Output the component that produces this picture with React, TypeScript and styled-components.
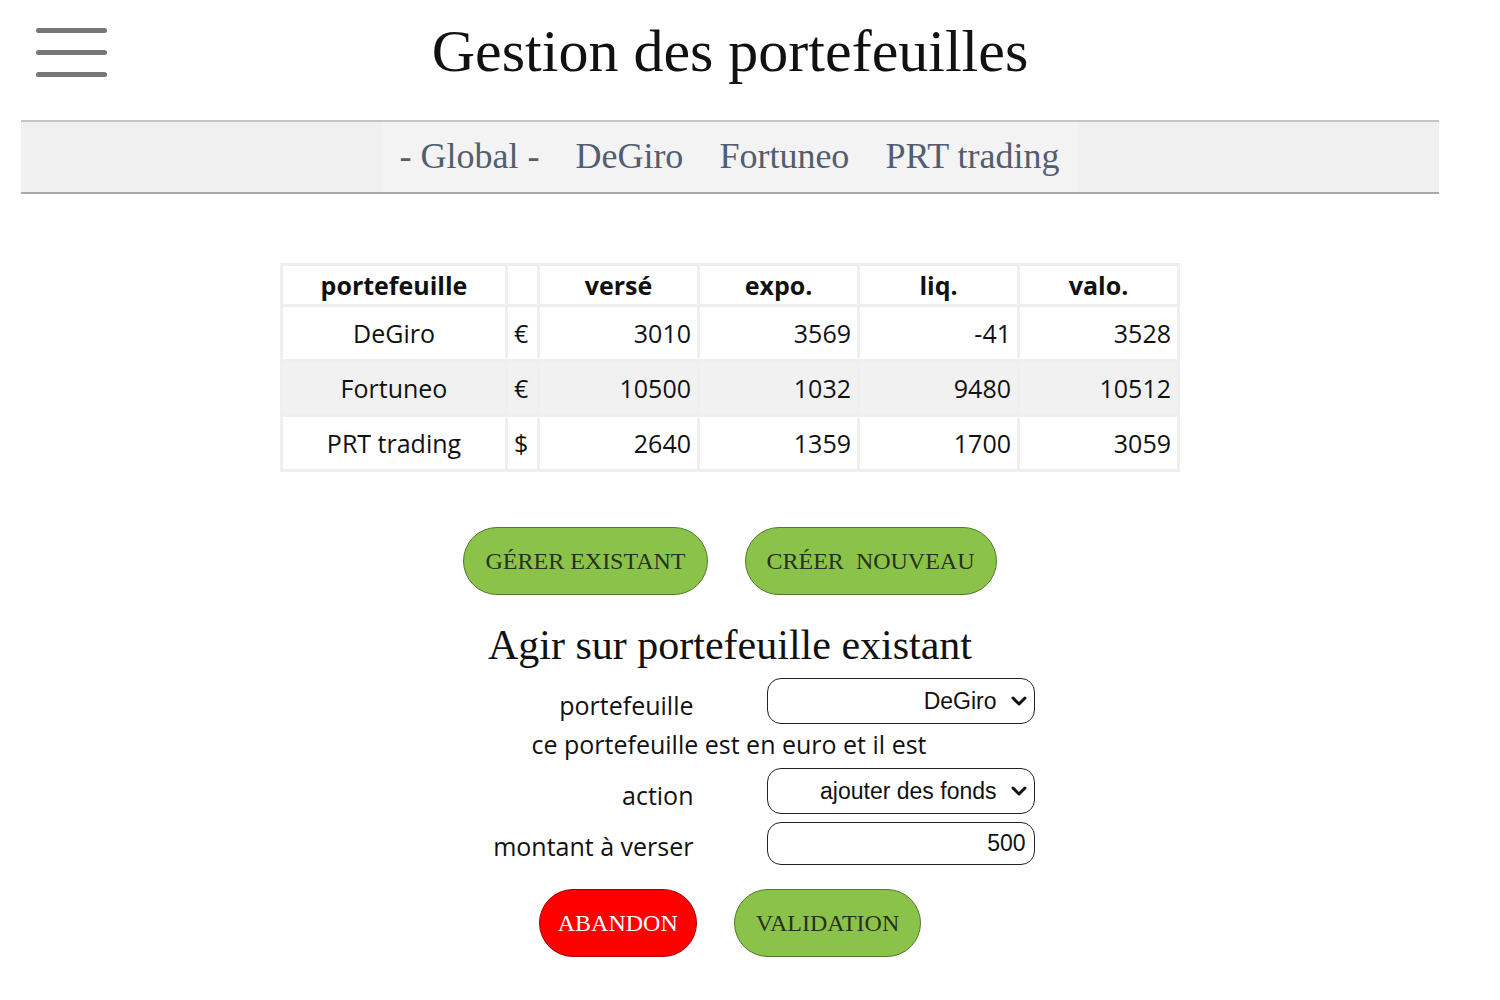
import React from "react";
import styled, { createGlobalStyle } from "styled-components";

const Global = createGlobalStyle`
  html, body { margin: 0; padding: 0; background: #fff; }
  body { font-family: "Open Sans", "Liberation Sans", sans-serif; color: #111; }
`;

const Page = styled.div`
  width: 1418px;
  margin-left: 21px;
  display: flex;
  flex-direction: column;
  align-items: center;
`;

const Header = styled.header`
  width: 100%;
  height: 120px;
  display: grid;
  grid-template-columns: 1fr auto 1fr;
  align-items: start;
`;

const Burger = styled.button`
  margin: 28px 0 0 15px;
  padding: 0;
  width: 71px;
  border: none;
  background: none;
  display: flex;
  flex-direction: column;
  gap: 17px;
  justify-self: start;
`;

const BurgerBar = styled.span`
  display: block;
  height: 5px;
  border-radius: 3px;
  background: #777;
`;

const Title = styled.h1`
  margin: 17px 0 0;
  font-family: "Liberation Serif", "Times New Roman", serif;
  font-weight: 400;
  font-size: 60px;
  line-height: 69px;
  color: #111;
`;

const NavBar = styled.nav`
  width: 100%;
  height: 70px;
  background: #f0f0f0;
  border-top: 2px solid #c4c4c4;
  border-bottom: 2px solid #a9a9a9;
  display: flex;
  justify-content: center;
`;

const NavList = styled.div`
  display: flex;
  align-items: center;
  gap: 36px;
  padding: 0 18px 0 17px;
  background: #f3f3f3;
`;

const NavItem = styled.a`
  font-family: "Liberation Serif", "Times New Roman", serif;
  font-size: 36px;
  color: #525d70;
  text-decoration: none;
  margin-top: -2px;
`;

const Table = styled.table`
  margin-top: 69px;
  border-collapse: collapse;
  font-family: "Open Sans", sans-serif;
  font-size: 25px;
  color: #111;
`;

const Row = styled.tr<{ $shade?: boolean }>`
  background: ${(p) => (p.$shade ? "#f1f1f1" : "#fff")};
`;

const Th = styled.th<{ $w: number }>`
  width: ${(p) => p.$w}px;
  height: 41px;
  padding: 0 6px;
  box-sizing: border-box;
  border: 3px solid #efefef;
  font-weight: 700;
  text-align: center;
  line-height: 30px;
  vertical-align: middle;
`;

const Td = styled.td<{ $align?: string }>`
  height: 52px;
  padding: 0 6px;
  border: 3px solid #efefef;
  text-align: ${(p) => p.$align || "right"};
  line-height: 34px;
`;

const ButtonRow = styled.div<{ $top: number; $gap: number }>`
  margin-top: ${(p) => p.$top}px;
  display: flex;
  gap: ${(p) => p.$gap}px;
`;

const Pill = styled.button<{ $variant?: "green" | "red" }>`
  height: 68px;
  padding: 0 ${(p) => (p.$variant === "red" ? 18 : 21)}px;
  border-radius: 34px;
  font-family: "Liberation Serif", "Times New Roman", serif;
  font-size: 24px;
  white-space: pre;
  background: ${(p) => (p.$variant === "red" ? "#ff0000" : "#8bc34a")};
  color: ${(p) => (p.$variant === "red" ? "#fff" : "#28311f")};
  border: 1.5px solid ${(p) => (p.$variant === "red" ? "#a80000" : "#4f7a2b")};
`;

const SubTitle = styled.h2`
  margin: 26px 0 0;
  font-family: "Liberation Serif", "Times New Roman", serif;
  font-weight: 400;
  font-size: 42px;
  line-height: 48px;
  color: #111;
`;

const Form = styled.div`
  margin-top: 9px;
  display: grid;
  grid-template-columns: 268px 268px;
  column-gap: 73px;
  align-items: end;
  font-family: "Open Sans", sans-serif;
  font-size: 25px;
  line-height: 33px;
`;

const Label = styled.label`
  text-align: right;
  margin-bottom: 2px;
`;

const Info = styled.div`
  grid-column: 1 / span 2;
  text-align: center;
  margin-top: 4px;
  padding-right: 2px;
`;

const SelectWrap = styled.div<{ $top?: number }>`
  position: relative;
  margin-top: ${(p) => p.$top || 0}px;
`;

const Select = styled.select`
  appearance: none;
  -webkit-appearance: none;
  display: block;
  width: 268px;
  height: 46px;
  box-sizing: border-box;
  border: 1.5px solid #222;
  border-radius: 14px;
  background: #fff;
  font-family: "Liberation Sans", Arial, sans-serif;
  font-size: 23px;
  color: #111;
  text-align: right;
  text-align-last: right;
  padding: 0 37px 0 10px;
`;

const Chevron = styled.svg`
  position: absolute;
  right: 8px;
  top: 50%;
  transform: translateY(-50%);
  width: 16px;
  height: 12px;
  pointer-events: none;
`;

const Input = styled.input<{ $top?: number }>`
  display: block;
  width: 268px;
  height: 43px;
  margin-top: ${(p) => p.$top || 0}px;
  box-sizing: border-box;
  border: 1.5px solid #222;
  border-radius: 14px;
  font-family: "Liberation Sans", Arial, sans-serif;
  font-size: 23px;
  color: #111;
  text-align: right;
  padding: 0 8px;
`;

const rows = [
  { name: "DeGiro", cur: "€", v: ["3010", "3569", "-41", "3528"] },
  { name: "Fortuneo", cur: "€", v: ["10500", "1032", "9480", "10512"] },
  { name: "PRT trading", cur: "$", v: ["2640", "1359", "1700", "3059"] },
];

const ChevronIcon = () => (
  <Chevron viewBox="0 0 16 12">
    <polyline points="2,3 8,9 14,3" fill="none" stroke="#111" strokeWidth="3" strokeLinecap="round" strokeLinejoin="round" />
  </Chevron>
);

export default function App() {
  return (
    <>
      <Global />
      <Page>
        <Header>
          <Burger aria-label="menu">
            <BurgerBar />
            <BurgerBar />
            <BurgerBar />
          </Burger>
          <Title>Gestion des portefeuilles</Title>
          <div />
        </Header>
        <NavBar>
          <NavList>
            <NavItem>- Global -</NavItem>
            <NavItem>DeGiro</NavItem>
            <NavItem>Fortuneo</NavItem>
            <NavItem>PRT trading</NavItem>
          </NavList>
        </NavBar>

        <Table>
          <thead>
            <Row>
              <Th $w={225}>portefeuille</Th>
              <Th $w={32}></Th>
              <Th $w={160}>versé</Th>
              <Th $w={160}>expo.</Th>
              <Th $w={160}>liq.</Th>
              <Th $w={160}>valo.</Th>
            </Row>
          </thead>
          <tbody>
            {rows.map((r, i) => (
              <Row key={r.name} $shade={i === 1}>
                <Td $align="center">{r.name}</Td>
                <Td $align="left">{r.cur}</Td>
                {r.v.map((x, j) => (
                  <Td key={j}>{x}</Td>
                ))}
              </Row>
            ))}
          </tbody>
        </Table>

        <ButtonRow $top={55} $gap={37}>
          <Pill>GÉRER EXISTANT</Pill>
          <Pill>{"CRÉER  NOUVEAU"}</Pill>
        </ButtonRow>

        <SubTitle>Agir sur portefeuille existant</SubTitle>

        <Form>
          <Label>portefeuille</Label>
          <SelectWrap>
            <Select defaultValue="DeGiro">
              <option>DeGiro</option>
              <option>Fortuneo</option>
              <option>PRT trading</option>
            </Select>
            <ChevronIcon />
          </SelectWrap>
          <Info>ce portefeuille est en euro et il est</Info>
          <Label>action</Label>
          <SelectWrap $top={7}>
            <Select defaultValue="ajouter des fonds">
              <option>ajouter des fonds</option>
              <option>retirer des fonds</option>
            </Select>
            <ChevronIcon />
          </SelectWrap>
          <Label>montant à verser</Label>
          <Input $top={8} defaultValue="500" />
        </Form>

        <ButtonRow $top={24} $gap={37}>
          <Pill $variant="red">ABANDON</Pill>
          <Pill>VALIDATION</Pill>
        </ButtonRow>
      </Page>
    </>
  );
}
